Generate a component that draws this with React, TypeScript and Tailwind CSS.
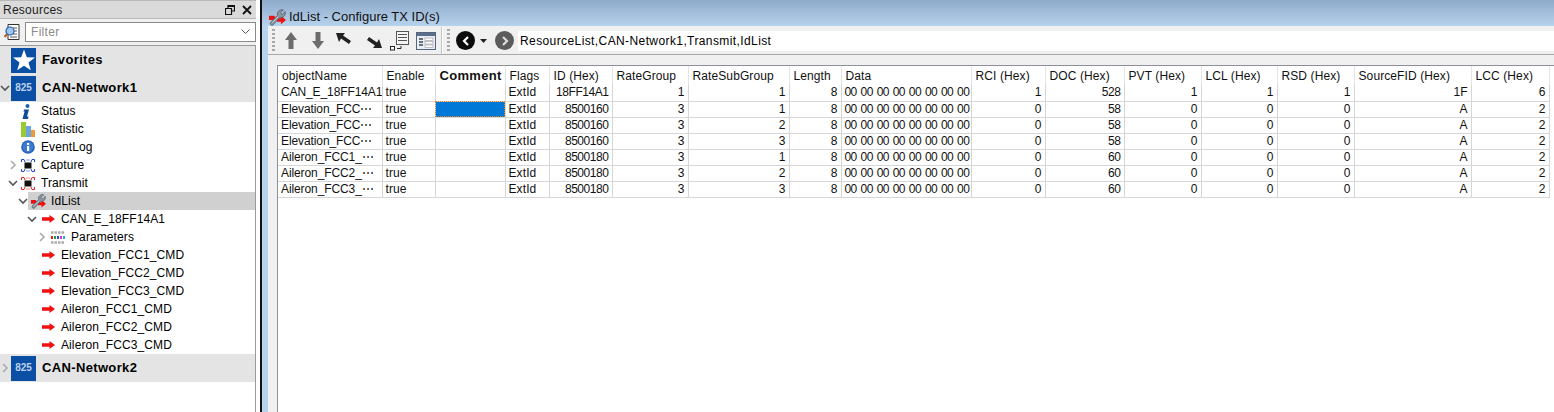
import { ReactNode } from 'react';

const font = 'font-["Liberation_Sans",sans-serif]';

const columns = [
    { name: 'objectName', width: 'w-[104px]', align: 'left', spacing: 'tracking-[-0.1px]' },
    { name: 'Enable', width: 'w-[53px]', align: 'left', spacing: 'tracking-[0.1px]' },
    { name: 'Comment', width: 'w-[70px]', align: 'left', spacing: '' },
    { name: 'Flags', width: 'w-[44px]', align: 'left', spacing: 'tracking-[0.1px]' },
    { name: 'ID (Hex)', width: 'w-[63px]', align: 'right', spacing: 'tracking-[-0.45px]' },
    { name: 'RateGroup', width: 'w-[76px]', align: 'right', spacing: '' },
    { name: 'RateSubGroup', width: 'w-[101px]', align: 'right', spacing: '' },
    { name: 'Length', width: 'w-[52px]', align: 'right', spacing: '' },
    { name: 'Data', width: 'w-[130px]', align: 'left', spacing: 'tracking-[-0.6px] [word-spacing:1.2px]' },
    { name: 'RCI (Hex)', width: 'w-[74px]', align: 'right', spacing: '' },
    { name: 'DOC (Hex)', width: 'w-[79px]', align: 'right', spacing: 'tracking-[-0.4px]' },
    { name: 'PVT (Hex)', width: 'w-[77px]', align: 'right', spacing: '' },
    { name: 'LCL (Hex)', width: 'w-[76px]', align: 'right', spacing: '' },
    { name: 'RSD (Hex)', width: 'w-[77px]', align: 'right', spacing: '' },
    { name: 'SourceFID (Hex)', width: 'w-[117px]', align: 'right', spacing: '' },
    { name: 'LCC (Hex)', width: 'w-[78px]', align: 'right', spacing: '' },
];

const zeros = '00 00 00 00 00 00 00 00';
const rows = [
    ['CAN_E_18FF14A1', 'true', '', 'ExtId', '18FF14A1', '1', '1', '8', zeros, '1', '528', '1', '1', '1', '1F', '6'],
    ['Elevation_FCC⋯', 'true', '', 'ExtId', '8500160', '3', '1', '8', zeros, '0', '58', '0', '0', '0', 'A', '2'],
    ['Elevation_FCC⋯', 'true', '', 'ExtId', '8500160', '3', '2', '8', zeros, '0', '58', '0', '0', '0', 'A', '2'],
    ['Elevation_FCC⋯', 'true', '', 'ExtId', '8500160', '3', '3', '8', zeros, '0', '58', '0', '0', '0', 'A', '2'],
    ['Aileron_FCC1_⋯', 'true', '', 'ExtId', '8500180', '3', '1', '8', zeros, '0', '60', '0', '0', '0', 'A', '2'],
    ['Aileron_FCC2_⋯', 'true', '', 'ExtId', '8500180', '3', '2', '8', zeros, '0', '60', '0', '0', '0', 'A', '2'],
    ['Aileron_FCC3_⋯', 'true', '', 'ExtId', '8500180', '3', '3', '8', zeros, '0', '60', '0', '0', '0', 'A', '2'],
];

function Chevron({ open }: { open?: boolean }) {
    return (
        <svg width="10" height="10" viewBox="0 0 10 10" className="shrink-0">
            {open ? (
                <polyline points="1,3 5,7 9,3" fill="none" stroke="#555" strokeWidth="1.6" />
            ) : (
                <polyline points="3,1 7,5 3,9" fill="none" stroke="#aaa" strokeWidth="1.6" />
            )}
        </svg>
    );
}

function RedArrow() {
    return (
        <svg width="13" height="8" viewBox="0 0 13 8" className="shrink-0">
            <path d="M0 2.2 H7.5 V0 L13 4 L7.5 8 V5.8 H0 Z" fill="#f01010" />
        </svg>
    );
}

function Wrench({ size = 16 }: { size?: number }) {
    return (
        <svg width={size} height={size} viewBox="0 0 20 20" className="shrink-0">
            <path d="M0 8 H6 L8 10 L6 13 H0 Z" fill="#ee1111" />
            <path d="M10 11 H14 V8 L20 13 L14 18 V15 H9 Z" fill="#ee1111" />
            <path d="M1.5 16 L10 7.5 C9 3.5 12.5 0 17 1 L13.5 4.5 L15.5 6.5 L19 3 C20 7.5 16.5 11 12.5 10 L4.5 19 C3 20 0.5 18 1.5 16 Z" fill="#8b95a1" stroke="#4a545f" strokeWidth="0.8" />
            <path d="M4 16 L11 9" stroke="#d0d6dc" strokeWidth="1" />
        </svg>
    );
}

function InfoItalic() {
    return (
        <svg width="10" height="15" viewBox="0 0 10 15" className="shrink-0">
            <circle cx="6.5" cy="2" r="2" fill="#1a5fb4" />
            <path d="M3 5.5 H8 L6 12.5 H7.5 L7 15 H1.5 L3.6 7.5 H2.5 Z" fill="#0f4c9c" />
        </svg>
    );
}

function Bars() {
    return (
        <svg width="14" height="15" viewBox="0 0 14 15" className="shrink-0">
            <rect x="0" y="0" width="5" height="15" fill="#9acb2e" />
            <rect x="5" y="4" width="5" height="11" fill="#6aa5e0" />
            <rect x="10" y="8" width="4" height="7" fill="#ef9a3c" />
        </svg>
    );
}

function InfoCircle() {
    return (
        <svg width="14" height="14" viewBox="0 0 14 14" className="shrink-0">
            <circle cx="7" cy="7" r="6.8" fill="#2a62b8" />
            <circle cx="7" cy="7" r="5.4" fill="#3b7bd0" />
            <rect x="6" y="6" width="2.2" height="5" fill="#fff" />
            <rect x="6" y="3" width="2.2" height="2" fill="#fff" />
        </svg>
    );
}

function Frame({ color }: { color: string }) {
    return (
        <svg width="14" height="13" viewBox="0 0 14 13" className="shrink-0">
            <rect x="3.5" y="3.5" width="7" height="6" fill="#111" />
            <path d="M0.5 3 V0.5 H3 L4 3 M13.5 3 V0.5 H11 L10 3 M0.5 10 V12.5 H3 L4 10 M13.5 10 V12.5 H11 L10 10" fill="none" stroke={color} strokeWidth="1" />
            <path d="M5.5 1 H8.5 M5.5 12 H8.5" stroke={color} strokeWidth="1" strokeDasharray="1 1" />
        </svg>
    );
}

function BitsIcon() {
    return (
        <svg width="14" height="13" viewBox="0 0 14 13" className="shrink-0">
            <path d="M0 1.5 H14 M0 11.5 H14" stroke="#aaa" strokeWidth="2.4" strokeDasharray="2.5 1" />
            <rect x="0" y="5" width="2" height="3" fill="#e02020" />
            <rect x="3" y="5" width="2" height="3" fill="#20a040" />
            <rect x="6" y="5" width="2" height="3" fill="#3050e0" />
            <rect x="9" y="5" width="2" height="3" fill="#e030d0" />
            <rect x="12" y="5" width="2" height="3" fill="#20b0e0" />
        </svg>
    );
}

function GroupHeader({ label, chevron, badge }: { label: string; chevron?: ReactNode; badge: ReactNode }) {
    return (
        <div className="flex h-[28px] items-center bg-[#e4e4e4]">
            <div className="flex w-[11px] shrink-0 items-center justify-start">{chevron}</div>
            <div className="flex size-[25px] shrink-0 items-center justify-center bg-[#0a4fa3]">{badge}</div>
            <span className="ml-[6px] pb-[2px] text-[13px] font-bold tracking-[0.35px] text-black">{label}</span>
        </div>
    );
}

function Badge825() {
    return <span className="text-[10px] font-bold text-[#bcd2ee]">825</span>;
}

function Star() {
    return (
        <svg width="24" height="24" viewBox="0 0 24 24">
            <path d="M12 1.5 L14.8 9.2 L23 9.4 L16.5 14.4 L18.8 22.3 L12 17.7 L5.2 22.3 L7.5 14.4 L1 9.4 L9.2 9.2 Z" fill="#fff" />
        </svg>
    );
}

function TreeRow({ indent, chevron, icon, label, iconBox, selected }: { indent: string; chevron?: ReactNode; icon: ReactNode; label: string; iconBox: string; selected?: boolean }) {
    return (
        <div className={`flex h-[18px] items-center ${indent}`}>
            <div className="flex w-[10px] shrink-0 items-center">{chevron}</div>
            <div className={`flex h-[18px] flex-1 items-center ${selected ? 'bg-[#d0d0d0]' : ''}`}>
                <div className={`flex shrink-0 items-center ${iconBox}`}>{icon}</div>
                <span className="tracking-[0.1px] text-black">{label}</span>
            </div>
        </div>
    );
}

function Sidebar() {
    return (
        <aside className="flex w-[256px] shrink-0 flex-col bg-[#f0f0f0]">
            <div className="flex h-[19px] items-center justify-between border-t border-b border-[#b8b8b8] bg-[#dadada] pl-[3px] pr-[4px]">
                <span className="tracking-[0.25px] text-[#222]">Resources</span>
                <div className="flex items-center gap-[7px]">
                    <svg width="10" height="10" viewBox="0 0 10 10">
                        <path d="M3 3 V0.5 H9.5 V6 H7 M0.5 3.5 H6.5 V9.5 H0.5 Z M3 1.5 H9" fill="none" stroke="#111" strokeWidth="1.2" />
                    </svg>
                    <svg width="10" height="10" viewBox="0 0 10 10">
                        <path d="M1 1 L9 9 M9 1 L1 9" stroke="#111" strokeWidth="1.8" />
                    </svg>
                </div>
            </div>
            <div className="flex h-[26px] items-center pl-[4px]">
                <svg width="16" height="16" viewBox="0 0 16 16" className="shrink-0">
                    <path d="M4 0.5 H15 V15.5 H4 Z" fill="#fff" stroke="#333" />
                    <path d="M9 4 H13 M10 7 H13 M9 10 H13 M6 13 H13" stroke="#555" />
                    <circle cx="6" cy="7" r="4" fill="#9cc8f0" stroke="#2a5ea8" strokeWidth="1.2" />
                    <path d="M3 10 L0.5 13" stroke="#b06020" strokeWidth="2" />
                </svg>
                <div className="ml-[5px] flex h-[20px] flex-1 items-center justify-between border border-[#8a8a8a] bg-white pl-[5px] pr-[5px] text-[#8a8a8a]">
                    <span className="tracking-[0.3px]">Filter</span>
                    <svg width="9" height="6" viewBox="0 0 9 6">
                        <polyline points="0.5,0.5 4.5,4.5 8.5,0.5" fill="none" stroke="#555" />
                    </svg>
                </div>
            </div>
            <div className="flex-1 border-t border-r border-[#9a9a9a] bg-white">
                <GroupHeader label="Favorites" badge={<Star />} />
                <GroupHeader label="CAN-Network1" chevron={<Chevron open />} badge={<Badge825 />} />
                <TreeRow indent="pl-[8px]" icon={<InfoItalic />} label="Status" iconBox="w-[23px] pl-[3px]" />
                <TreeRow indent="pl-[8px]" icon={<Bars />} label="Statistic" iconBox="w-[23px] pl-[3px]" />
                <TreeRow indent="pl-[8px]" icon={<InfoCircle />} label="EventLog" iconBox="w-[23px] pl-[3px]" />
                <TreeRow indent="pl-[8px]" chevron={<Chevron />} icon={<Frame color="#2040e0" />} label="Capture" iconBox="w-[23px] pl-[3px]" />
                <TreeRow indent="pl-[8px]" chevron={<Chevron open />} icon={<Frame color="#e02020" />} label="Transmit" iconBox="w-[23px] pl-[3px]" />
                <TreeRow indent="pl-[18px]" chevron={<Chevron open />} icon={<Wrench size={15} />} label="IdList" iconBox="w-[23px] pl-[3px]" selected />
                <TreeRow indent="pl-[27px]" chevron={<Chevron open />} icon={<RedArrow />} label="CAN_E_18FF14A1" iconBox="w-[24px] pl-[5px]" />
                <TreeRow indent="pl-[37px]" chevron={<Chevron />} icon={<BitsIcon />} label="Parameters" iconBox="w-[24px] pl-[4px]" />
                <TreeRow indent="pl-[27px]" icon={<RedArrow />} label="Elevation_FCC1_CMD" iconBox="w-[24px] pl-[5px]" />
                <TreeRow indent="pl-[27px]" icon={<RedArrow />} label="Elevation_FCC2_CMD" iconBox="w-[24px] pl-[5px]" />
                <TreeRow indent="pl-[27px]" icon={<RedArrow />} label="Elevation_FCC3_CMD" iconBox="w-[24px] pl-[5px]" />
                <TreeRow indent="pl-[27px]" icon={<RedArrow />} label="Aileron_FCC1_CMD" iconBox="w-[24px] pl-[5px]" />
                <TreeRow indent="pl-[27px]" icon={<RedArrow />} label="Aileron_FCC2_CMD" iconBox="w-[24px] pl-[5px]" />
                <TreeRow indent="pl-[27px]" icon={<RedArrow />} label="Aileron_FCC3_CMD" iconBox="w-[24px] pl-[5px]" />
                <GroupHeader label="CAN-Network2" chevron={<Chevron />} badge={<Badge825 />} />
            </div>
        </aside>
    );
}

function Grip() {
    return <div className="h-[23px] w-[3px] shrink-0 bg-[repeating-linear-gradient(to_bottom,#a8a8a8_0,#a8a8a8_2px,transparent_2px,transparent_4px)]" />;
}

function Toolbar() {
    return (
        <div className="flex h-[29px] items-center border-b border-[#a8a8a8] bg-[#f0f0f0] pl-[4px] pt-[1px]">
            <Grip />
            <svg width="12" height="17" viewBox="0 0 12 17" className="ml-[10px] shrink-0"><path d="M6 0 L12 8 H8.5 V17 H3.5 V8 H0 Z" fill="#6c6c6c" /></svg>
            <svg width="12" height="17" viewBox="0 0 12 17" className="ml-[15px] shrink-0"><path d="M6 17 L12 9 H8.5 V0 H3.5 V9 H0 Z" fill="#6c6c6c" /></svg>
            <svg width="15" height="11" viewBox="0 0 15 11" className="ml-[12px] mb-[4px] shrink-0"><path d="M0 0 H9 L7 2.5 L15 8 L13 11 L5 5.5 L3 9 Z" fill="#222" /></svg>
            <svg width="15" height="11" viewBox="0 0 15 11" className="ml-[16px] mt-[3px] shrink-0"><path d="M15 11 H6 L8 8.5 L0 3 L2 0 L10 5.5 L12 2 Z" fill="#222" /></svg>
            <svg width="20" height="20" viewBox="0 0 20 20" className="ml-[8px] shrink-0">
                <rect x="6.5" y="0.5" width="12" height="13" fill="#f4f4f4" stroke="#555" />
                <path d="M8 3.5 H17 M8 6.5 H17 M8 9.5 H17" stroke="#555" />
                <rect x="0.5" y="15.5" width="4" height="3.5" fill="#fff" stroke="#222" />
                <path d="M7 17.5 H11 V15" fill="none" stroke="#222" />
            </svg>
            <svg width="20" height="18" viewBox="0 0 20 18" className="ml-[6px] shrink-0">
                <rect x="0.5" y="0.5" width="19" height="17" fill="#e8eef6" stroke="#56657a" />
                <rect x="1" y="1" width="18" height="3" fill="#5a6e8e" />
                <path d="M3 7 H7 M3 10 H7 M3 13 H7" stroke="#444" strokeWidth="1.4" />
                <rect x="9" y="6" width="8" height="2.5" fill="#fff" stroke="#888" strokeWidth="0.5" />
                <rect x="9" y="9.5" width="8" height="2.5" fill="#fff" stroke="#888" strokeWidth="0.5" />
                <rect x="9" y="13" width="8" height="2.5" fill="#fff" stroke="#888" strokeWidth="0.5" />
            </svg>
            <div className="ml-[5px] h-[27px] w-[2px] shrink-0 border-l border-r border-l-[#c4c4c4] border-r-white" />
            <div className="ml-[4px]"><Grip /></div>
            <div className="ml-[6px] flex size-[19px] shrink-0 items-center justify-center rounded-full bg-[#0c0c0c]">
                <svg width="8" height="10" viewBox="0 0 8 10"><polyline points="6,1 2,5 6,9" fill="none" stroke="#fff" strokeWidth="2.2" /></svg>
            </div>
            <svg width="7" height="4" viewBox="0 0 7 4" className="ml-[5px] shrink-0"><path d="M0 0 H7 L3.5 4 Z" fill="#222" /></svg>
            <div className="ml-[8px] flex size-[19px] shrink-0 items-center justify-center rounded-full bg-[#5c5c5c]">
                <svg width="8" height="10" viewBox="0 0 8 10"><polyline points="2,1 6,5 2,9" fill="none" stroke="#ddd" strokeWidth="2.2" /></svg>
            </div>
            <div className="ml-[4px] flex h-[20px] flex-1 items-center bg-white pl-[2px] tracking-[0.4px] text-black">
                ResourceList,CAN-Network1,Transmit,IdList
            </div>
        </div>
    );
}

function Grid() {
    return (
        <div className="ml-[9px] mt-[10px] flex-1 border-t border-l border-[#8f8f9a] bg-white">
            <table className="w-[1271px] table-fixed border-collapse">
                <colgroup>
                    {columns.map((col) => (
                        <col key={col.name} className={col.width} />
                    ))}
                </colgroup>
                <thead>
                    <tr className="h-[19px]">
                        {columns.map((col) => (
                            <th
                                key={col.name}
                                className={`overflow-hidden whitespace-nowrap border-r border-[#e4e4e4] pl-[4px] text-left text-[#111] ${col.name === 'Comment' ? 'text-[13px] font-bold tracking-[0.3px]' : 'font-normal tracking-[0.1px]'}`}
                            >
                                {col.name}
                            </th>
                        ))}
                    </tr>
                </thead>
                <tbody>
                    {rows.map((row, r) => (
                        <tr key={r} className="h-[16px]">
                            {row.map((cell, c) => {
                                const selected = r === 1 && c === 2;
                                return (
                                    <td
                                        key={c}
                                        className={`overflow-hidden whitespace-nowrap border-r border-b border-[#d6d6d6] p-0 leading-[15px] text-[#111] ${columns[c].spacing} ${columns[c].align === 'right' ? 'pr-[3px] text-right' : 'pl-[3px] text-left'} ${selected ? 'bg-[#0078d7] outline-1 -outline-offset-1 outline-dotted outline-[#e8801a]' : ''}`}
                                    >
                                        {cell}
                                    </td>
                                );
                            })}
                        </tr>
                    ))}
                </tbody>
            </table>
        </div>
    );
}

export default function App() {
    return (
        <div className={`flex h-[412px] w-[1554px] overflow-hidden bg-white text-[12px] leading-none ${font}`}>
            <Sidebar />
            <div className="w-[4px] shrink-0 bg-white" />
            <main className="flex min-w-0 flex-1 flex-col border-l-2 border-[#111]">
                <div className="flex h-[26px] shrink-0 items-end bg-gradient-to-b from-[#8fabcb] to-[#b6d2ec] pl-[7px]">
                    <div className="flex items-center gap-[3px]">
                        <Wrench size={17} />
                        <span className="pb-[2px] text-[13px] text-[#111]">IdList - Configure TX ID(s)</span>
                    </div>
                </div>
                <div className="flex min-h-0 flex-1">
                    <div className="w-[6px] shrink-0 bg-[#b6d2ec]" />
                    <div className="flex min-w-0 flex-1 flex-col bg-[#f0f0f0]">
                        <Toolbar />
                        <Grid />
                    </div>
                </div>
            </main>
        </div>
    );
}
